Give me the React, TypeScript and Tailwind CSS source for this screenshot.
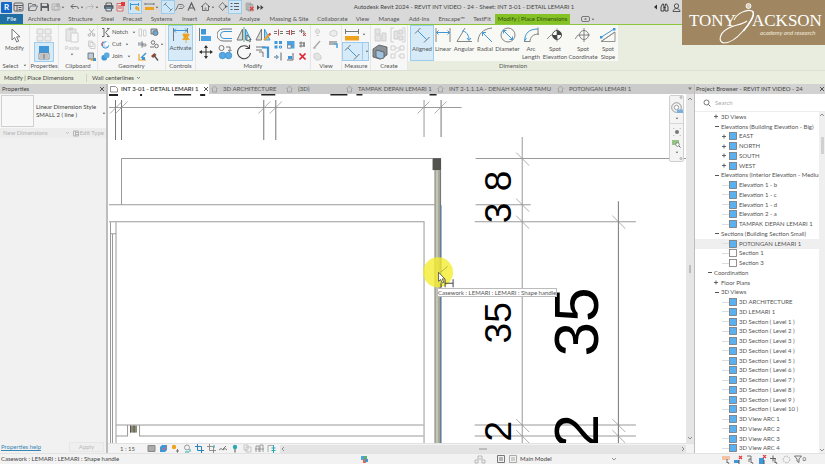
import type { ReactNode } from "react";

const BLUE = "#3f97d8";
const DARK = "#5b5f63";
const FADE = "#cfcfcf";

const Svg = ({ w, h, className = "", children }: { w: number; h: number; className?: string; children: ReactNode }) => (
    <svg width={w} height={h} viewBox={`0 0 ${w} ${h}`} fill="none" className={`shrink-0 ${className}`} aria-hidden="true">
        {children}
    </svg>
);

const Caret = ({ className = "" }: { className?: string }) => (
    <Svg w={4} h={3} className={className}>
        <path d="M.7 .7h2.600L2 2.300z" fill="#555" />
    </Svg>
);

/* ---------- Quick access bar ---------- */

const quick: { label: string; box: string; on?: boolean; caret?: boolean; art: ReactNode }[] = [
    { label: "Home", box: "w-[14px]", art: <><rect x="1" y="2" width="9" height="8" rx="1" stroke={DARK} /><path d="M1 4.500h9M4 4v6M5.500 6.500h3M5.500 8.500h3" stroke={DARK} /></> },
    { label: "Open", box: "w-[12px]", art: <path d="M1.500 9.500v-7h3l1 1h3v1.500M1.500 9.500l2-4.500h7l-2 4.500z" stroke={DARK} strokeWidth=".8" /> },
    { label: "Save", box: "w-[11px]", art: <><path d="M1.500 2h7l1.500 1.500V10H1.500z" fill={DARK} /><path d="M3 2.500h5v2.500H3zM3 7h5.500v3H3z" fill="#d9d9d9" /></> },
    { label: "Sync", box: "w-[19px]", caret: true, art: <><path d="M2 3h6v6H2zM4 5h6v4H4z" stroke="#b2b2b2" /><circle cx="8" cy="4" r="2" fill="#b2b2b2" /></> },
    { label: "Undo", box: "w-[15px]", caret: true, art: <path d="M4.500 3L2 5.500 4.500 8M2 5.500h5.500q2 .3 2 2.500" stroke={DARK} strokeWidth=".9" /> },
    { label: "Redo", box: "w-[19px]", caret: true, art: <path d="M7 3l2.500 2.500L7 8M9.500 5.500H4q-2 .3-2 2.500" stroke="#b8b8b8" strokeWidth=".9" /> },
    { label: "Print", box: "w-[12px]", art: <><path d="M3 4.500V2h5.500v2.500M3 8v2h5.500V8" stroke={DARK} /><rect x="1" y="4" width="9.500" height="4" rx="1" fill={DARK} /><path d="M3 7h5.500" stroke="#6db5e8" /></> },
    { label: "Close inactive", box: "w-[14px]", art: <><path d="M2 2.500h6V10H2z" fill="#e9e9e9" stroke="#d34b4b" strokeWidth=".8" /><path d="M3 5h4M3 7h4" stroke="#d34b4b" /><path d="M6 1h4v4H6z" fill="#e23b3b" /></> },
    { label: "Aligned dimension", box: "w-[12px] mr-[3px]", on: true, art: <><path d="M1 3.500h9M1.500 2v7M9.500 2v3" stroke={BLUE} /><path d="M6 7h3.500v3M7.500 5v4" stroke="#efa21d" strokeWidth="1.500" /></> },
    { label: "Measure", box: "w-[18px]", caret: true, art: <><path d="M1 3h9M1 2v2M10 2v2" stroke={DARK} strokeWidth=".8" /><path d="M1 6h9v3H1z" fill="#efa21d" /></> },
    { label: "Align", box: "w-[12px]", on: true, art: <><path d="M3 3l6 6" stroke={BLUE} strokeWidth=".9" /><path d="M1.500 4.500l3-3M7.500 10.500l3-3" stroke={DARK} strokeWidth=".7" /></> },
    { label: "Tag", box: "w-[12px]", art: <path d="M1.500 9.500l3-6h4l1.500 2-1.500 2h-4M6.500 5.500h1" stroke={DARK} strokeWidth=".8" /> },
    { label: "Text", box: "w-[14px]", art: <path d="M2 9.500L5.500 2 9 9.500M3.200 7h4.600" stroke={DARK} strokeWidth="1.200" /> },
    { label: "3D view", box: "w-[17px]", caret: true, art: <><path d="M1 6l4.500-4L10 6M2.500 5v4.500h6V5" stroke={DARK} strokeWidth=".9" /><path d="M4.500 6.500h2v3h-2z" fill="#9a9a9a" /></> },
    { label: "Section", box: "w-[12px]", art: <><path d="M5.500 1.500L9 5.500l-3.500 4-3.500-4z" stroke={DARK} strokeWidth=".8" /><path d="M8 4l3 1.500L8 7z" fill={DARK} /></> },
    { label: "Thin lines", box: "w-[12px] mr-[3px]", on: true, art: <path d="M1.500 2.500h2M5 2.500h5M1.500 5.500h2M5 5.500h5M1.500 8.500h2M5 8.500h5" stroke={DARK} strokeWidth="1.200" /> },
    { label: "Close hidden", box: "w-[13px]", art: <><path d="M2 2h5v7H2zM4 3.500h5V10H4z" fill="#bcbcbc" stroke="#999" strokeWidth=".6" /><path d="M6 6l3.500 3.500M9.500 6L6 9.500" stroke="#e23b3b" strokeWidth="1.200" /></> },
];

const TitleBar = () => (
    <header className="flex h-[14px] shrink-0 items-center bg-[#d9d9d9] pl-px text-[#444]">
        <button aria-label="Revit" className="mr-px flex h-[11px] w-[11px] items-center justify-center rounded-[1px] bg-[#1668c7] text-[8px] font-bold text-white">R</button>
        <div className="flex shrink-0 items-center">
            {quick.map((q) => (
                <button key={q.label} aria-label={q.label} className={`flex h-[12px] shrink-0 items-center ${q.box} ${q.on ? "bg-[#d0e6f5] outline outline-[#9dcbea]" : ""}`}>
                    <Svg w={11} h={12}>{q.art}</Svg>
                    {q.caret && <Caret />}
                </button>
            ))}
            <Svg w={7} h={7}><path d="M0 1l3 2.500L0 6zM3.500 1l3 2.500-3 2.500z" fill="#444" /></Svg>
        </div>
        <h1 className="flex-1 truncate pl-[10px] text-center">Autodesk Revit 2024 - REVIT INT VIDEO - 24 - Sheet: INT 3-01 - DETAIL LEMARI 1</h1>
        <div className="mr-[144px] flex items-center gap-[3px]">
            <Svg w={3} h={6}><path d="M3 .5v5L0 3z" fill="#333" /></Svg>
            <Svg w={9} h={9}><path d="M1 8V4l1.500-3h1L4 4v4zM5 8V4l.5-3h1L8 4v4z" stroke="#333" strokeWidth=".9" /><path d="M3.500 4.500h2" stroke="#333" /></Svg>
            <Svg w={9} h={9}><circle cx="4.500" cy="3" r="2.200" stroke="#333" strokeWidth=".8" /><path d="M1 8.500c0-2 2-3 3.500-3s3.500 1 3.500 3z" stroke="#333" strokeWidth=".8" /></Svg>
        </div>
    </header>
);

/* ---------- Ribbon ---------- */

const tabs = [
    ["Architecture", "w-[42px]"],
    ["Structure", "w-[31px]"],
    ["Steel", "w-[23px]"],
    ["Precast", "w-[27px]"],
    ["Systems", "w-[31px]"],
    ["Insert", "w-[25px]"],
    ["Annotate", "w-[33px]"],
    ["Analyze", "w-[29px]"],
    ["Massing & Site", "w-[50px]"],
    ["Collaborate", "w-[37px]"],
    ["View", "w-[23px]"],
    ["Manage", "w-[30px]"],
    ["Add-Ins", "w-[30px]"],
    ["Enscape™", "w-[35px]"],
    ["TestFit", "w-[26px]"],
];

const RibbonTabs = () => (
    <nav className="flex h-[11px] shrink-0 items-center border-b border-[#8cc63f] bg-[#d9d9d9] text-[#555]">
        <button className="h-full w-[23px] bg-[#1f6fa5] text-white">File</button>
        {tabs.map(([name, box]) => (
            <button key={name} className={`whitespace-nowrap text-center ${box}`}>{name}</button>
        ))}
        <button className="h-full w-[75px] whitespace-nowrap bg-[#84c225] text-[#33500c]">Modify | Place Dimensions</button>
        <button aria-label="Ribbon display" className="ml-[11px] flex items-center gap-px">
            <Svg w={9} h={6}><rect x=".5" y=".5" width="8" height="5" rx="1.500" stroke="#777" /><path d="M3 3.500h3L4.500 2z" fill="#555" /></Svg>
            <Caret />
        </button>
    </nav>
);

const Panel = ({ name, box, children, green, caret }: { name: string; box: string; children: ReactNode; green?: boolean; caret?: boolean }) => (
    <section className={`flex h-full shrink-0 flex-col ${box} ${green ? "" : "border-r border-[#e6e6e6]"}`}>
        <div className={`flex h-[36px] items-start pt-px ${green ? "bg-[#f8f9f5]" : ""}`}>{children}</div>
        <h2 className="flex h-[9px] items-center justify-center gap-1 whitespace-nowrap text-[#555]">
            {name}
            {caret && <Caret />}
        </h2>
    </section>
);

const Small = ({ label, children, box = "w-[12px]" }: { label: string; children: ReactNode; box?: string }) => (
    <button aria-label={label} className={`flex h-[12px] items-center justify-center ${box}`}>
        <Svg w={9} h={9}>{children}</Svg>
    </button>
);

const Big = ({ label, box = "w-[19px]", children }: { label: string; box?: string; children: ReactNode }) => (
    <button aria-label={label} className={`flex h-[17px] items-center justify-center ${box}`}>
        <Svg w={16} h={16}>{children}</Svg>
    </button>
);

const geometry: { label: string; art: ReactNode }[] = [
    { label: "Notch", art: <path d="M1 .5h2v8H1M8 .5L4.500 4.500 8 8.500M6 .5h2.500M6 8.500h2.500" stroke="#666" /> },
    { label: "Cut", art: <><circle cx="4.500" cy="5" r="3.200" fill="#cfe5f6" stroke={BLUE} /><path d="M2 1.500A4 4 0 0 0 1 6" stroke="#d34b4b" /><circle cx="6" cy="4" r="2" fill="#fff" /></> },
    { label: "Join", art: <><rect x=".5" y="3" width="5.500" height="5.500" rx="2" fill={BLUE} /><rect x="3" y=".5" width="5.500" height="5.500" rx="2" fill="#5aa9e2" /></> },
];

const modifySmall: { label: string; art: ReactNode }[] = [
    { label: "Split element", art: <><path d="M0 3.500h3M6 3.500h3M0 5.500h3M6 5.500h3" stroke="#777" /><path d="M4.500 1.500v6" stroke="#d34b4b" /></> },
    { label: "Split with gap", art: <><path d="M0 3.500h3M6 3.500h3M0 5.500h3M6 5.500h3" stroke="#777" /><path d="M3.500 2v5M5.500 2v5" stroke="#d34b4b" /></> },
    { label: "Unpin", art: <><path d="M1 3h5M3.500 1v4M6 3v5" stroke="#777" /><path d="M5 5l3 3M8 5L5 8" stroke="#d34b4b" /></> },
    { label: "Array", art: <><path d="M.5 1h3v3h-3zM5 1h3v3H5zM.5 5.500h3v3h-3z" fill={BLUE} /><path d="M5.500 6h2v2h-2z" stroke={BLUE} /></> },
    { label: "Scale", art: <><path d="M1 1h7.500v7.500H1z" fill="#4ba3e3" /><path d="M1.500 5h3.500v3H1.500z" fill="#fff" stroke="#777" strokeWidth=".7" /></> },
    { label: "Pin", art: <><path d="M1 3h6M1 6h6M3 1.500v6" stroke="#777" /><path d="M6 2.500v4" stroke="#777" strokeWidth="1.500" /></> },
    { label: "Trim single", art: <><path d="M0 5h4M7 .5v8" stroke="#666" /><path d="M2 3l2.500 2L2 7" stroke={BLUE} /></> },
    { label: "Trim multiple", art: <><path d="M1 8h6V1" stroke="#666" /><path d="M2 4h4v3H2z" fill={BLUE} /></> },
    { label: "Delete", art: <path d="M1.500 1.500l6 6M7.500 1.500l-6 6" stroke="#e0222c" strokeWidth="1.700" /> },
];

const dims: { name: string; box: string; on?: boolean; art: ReactNode }[] = [
    { name: "Aligned", box: "w-[22px]", on: true, art: <><path d="M4 4l8.500 8.500" stroke={BLUE} /><path d="M1 6.500L6.500 1M10 15.500L15.500 10" stroke="#666" strokeWidth=".9" /></> },
    { name: "Linear", box: "w-[20px]", art: <><path d="M1.500 5.500h13" stroke={BLUE} /><path d="M3.500 3.500l-2 2 2 2M12.500 3.500l2 2-2 2" stroke={BLUE} /><path d="M1 1v14M15 1v14" stroke="#777" strokeWidth=".9" /></> },
    { name: "Angular", box: "w-[22px]", art: <><path d="M1 14.500h15M1 14.500L9 1" stroke="#777" strokeWidth=".9" /><path d="M6 4c4 0 7 4 7 9" stroke={BLUE} /><path d="M11 11l2 2.500 2-2.500" stroke={BLUE} /></> },
    { name: "Radial", box: "w-[20px]", art: <><path d="M1 15C1 7 6 2 15 1" stroke="#777" strokeWidth=".9" /><path d="M6 6l9 9" stroke={BLUE} /><path d="M5.500 9V5.500H9" stroke={BLUE} /></> },
    { name: "Diameter", box: "w-[25px]", art: <><circle cx="8" cy="8" r="7" stroke="#777" strokeWidth=".9" /><path d="M3.500 3.500l9 9" stroke={BLUE} /><path d="M3.500 6.500v-3h3M12.500 9.500v3h-3" stroke={BLUE} /></> },
    { name: "Arc Length", box: "w-[22px]", art: <><path d="M1.500 14C2 6 6 2 15 2" stroke={BLUE} /><path d="M7 15c0-5 3-8 9-8M1 14.500h6M15 .5V8" stroke="#777" strokeWidth=".9" /><path d="M3.500 11l-2 3" stroke={BLUE} /></> },
    { name: "Spot Elevation", box: "w-[26px]", art: <><path d="M0 12l4-4h3" stroke="#777" strokeWidth=".9" /><circle cx="10" cy="8" r="4.500" fill="#fff" stroke="#555" /><path d="M10 8V3.500A4.500 4.500 0 0 1 14.500 8zM10 8v4.500A4.500 4.500 0 0 1 5.500 8z" fill="#444" /><path d="M10 1.500v13" stroke="#555" strokeWidth=".7" /></> },
    { name: "Spot Coordinate", box: "w-[30px]", art: <><path d="M0 12l3-4h12M9 1v14" stroke="#777" strokeWidth=".9" /><circle cx="9" cy="8" r="4.500" stroke="#777" strokeWidth=".9" /></> },
    { name: "Spot Slope", box: "w-[20px]", art: <><path d="M1 14.500h14V5zM1 14.500L15 5" stroke="#888" strokeWidth=".9" /><path d="M1.500 10L14 2" stroke={BLUE} /><path d="M0 9h2.500v2.500H0zM13 1h2.500v2.500H13z" fill={BLUE} /></> },
];

const Ribbon = () => (
    <div className="flex h-[45px] shrink-0 bg-[#e9eddf]">
        <div className="flex h-full bg-[#f7f7f7]">
            <Panel name="Select" box="w-[30px]" caret>
                <button className="flex w-full flex-col items-center">
                    <Svg w={14} h={18}><path d="M4 3v11l2.700-2.500 2 4.500 2-.9-2-4.300H12z" fill="#fff" stroke="#666" strokeWidth=".9" /></Svg>
                    Modify
                </button>
            </Panel>
            <Panel name="Properties" box="w-[29px]">
                <div className="flex w-full flex-col items-center">
                    <Big label="Type properties"><path d="M1 2h6v5H1zM9 2h6v5H9zM1 9h6v5H1zM9 9h6v5H9z" fill="#ececec" stroke={FADE} /></Big>
                    <button aria-label="Properties" className="flex h-[18px] w-[18px] items-center justify-center bg-[#d6eaf7] outline outline-[#9ccdee]">
                        <Svg w={14} h={15}><path d="M2 1h10v7H2z" fill={BLUE} /><path d="M2 8h10v6H2z" fill="#fff" stroke="#777" strokeWidth=".8" /><path d="M3 10h8M3 12h8M7 9v5" stroke="#666" strokeWidth=".8" /></Svg>
                    </button>
                </div>
            </Panel>
            <Panel name="Clipboard" box="w-[39px]">
                <button className="flex w-[26px] flex-col items-center text-[#c6c6c6]">
                    <Svg w={16} h={18}><path d="M2 3h10v12H2z" fill="#e6e6e6" stroke={FADE} /><path d="M5 1.500h4v3H5z" fill={FADE} /><path d="M7 7h7v9H7z" fill="#f8f8f8" stroke={FADE} /></Svg>
                    Paste
                    <Caret className="mt-px" />
                </button>
                <div>
                    <Small label="Cut to clipboard"><path d="M2 1l4 5M7 1L3 6" stroke="#b5b5b5" /><circle cx="2.300" cy="7" r="1.200" stroke="#b5b5b5" /><circle cx="6.700" cy="7" r="1.200" stroke="#b5b5b5" /></Small>
                    <Small label="Copy to clipboard"><path d="M1.500 1h3.500l1 1v4.500H1.500zM3 2.500h3.500L8 4v4.500H3z" fill="#f7f7f7" stroke={FADE} /></Small>
                    <Small label="Match type"><path d="M1 1h5.500v6H1z" fill="#bcd" stroke="#666" strokeWidth=".8" /><path d="M3 8l4-3 1 2-3 2z" fill="#efa21d" /><path d="M6 6h3v3H6z" fill={BLUE} /></Small>
                </div>
            </Panel>
            <Panel name="Geometry" box="w-[68px]">
                <div className="w-[38px] pl-[3px]">
                    {geometry.map((g) => (
                        <button key={g.label} className="flex h-[12px] w-full items-center gap-[2px]">
                            <Svg w={9} h={9}>{g.art}</Svg>
                            {g.label}
                            <Caret className="ml-[2px]" />
                        </button>
                    ))}
                </div>
                <div>
                    <Small label="Wall opening"><path d="M1 1h2.500v7H1zM5.500 2H8v6H5.500z" stroke={FADE} /></Small>
                    <Small label="Beam joins"><path d="M0 3h5v2H0zM4 4h4v2H4zM4 1v7" fill="#cfe0ee" stroke="#888" strokeWidth=".8" /></Small>
                    <Small label="Paint"><path d="M1 2v6h7" stroke="#efa21d" strokeWidth="1.200" /><path d="M3 6l5-5" stroke={BLUE} strokeWidth="1.400" /><path d="M4 5h3v3H4z" fill={BLUE} /></Small>
                </div>
                <div>
                    <Small label="Cope"><path d="M1 1h6v5H1z" fill="#a9c9e4" stroke="#777" /><circle cx="5.500" cy="5" r="2.500" fill="#6aa8d8" stroke="#777" /></Small>
                    <Small label="Wall joins"><circle cx="3" cy="2.500" r="1.800" stroke="#777" /><circle cx="6.500" cy="6" r="1.800" stroke="#777" /><path d="M0 7h4" stroke="#777" /></Small>
                    <Small label="Demolish"><path d="M1 4l3.500-3 2 2L3 6z" fill="#8a4a35" /><path d="M4.500 4L8 8.500" stroke="#555" strokeWidth="1.400" /></Small>
                </div>
                <Caret className="mt-[17px]" />
            </Panel>
            <Panel name="Controls" box="w-[30px]">
                <button className="mx-auto flex h-[34px] w-[23px] flex-col items-center bg-[#d6eaf7] outline outline-[#9ccdee]">
                    <Svg w={18} h={18}><path d="M2 4.500h13" stroke={BLUE} /><path d="M4 2.500l-2 2 2 2M13 2.500l2 2-2 2" stroke={BLUE} /><path d="M1.500 2v13M15.500 2v5" stroke="#777" /><path d="M11 8h6v1.500l-1.200.5v2l1.500 1.500H10.500L12 12v-2l-1-.5zM14 13v4" fill="#efa21d" stroke="#efa21d" strokeWidth=".8" /></Svg>
                    Activate
                </button>
            </Panel>
            <Panel name="Modify" box="w-[115px]">
                <div className="grid grid-cols-4">
                    <Big label="Align"><path d="M1.500 1v13" stroke="#777" /><path d="M3 2h5v5.500H3z" fill={BLUE} /><path d="M3 9h10v5H3z" fill="#4ba3e3" /></Big>
                    <Big label="Offset"><path d="M15 2H6a5.500 5.500 0 0 0 0 12h9" stroke="#777" /><path d="M15 4.500H7a3.500 3.500 0 0 0 0 7h8" stroke={BLUE} /></Big>
                    <Big label="Mirror pick"><path d="M6.500 2v11H1z" fill="#ddd" stroke="#777" /><path d="M9.500 2v11H15z" fill="#9fcdf0" stroke={BLUE} /><path d="M8 0v15" stroke="#3a9c4c" strokeWidth=".8" /><path d="M11 8v6l1.500-1 1 2 1-.5-1-2H15z" fill="#fff" stroke="#444" strokeWidth=".7" /></Big>
                    <Big label="Mirror draw"><path d="M6.500 2v11H1z" fill="#ddd" stroke="#777" /><path d="M9.500 2v11H15z" fill="#9fcdf0" stroke={BLUE} /><path d="M9 13l6-6" stroke="#efa21d" strokeWidth="2" /><path d="M14 8l1.500-1.500" stroke="#d34b4b" strokeWidth="2" /></Big>
                    <Big label="Move"><path d="M8 2v12M2 8h12" stroke="#333" /><path d="M8 1l2 3H6zM8 15l2-3H6zM1 8l3-2v4zM15 8l-3-2v4z" fill="#333" /></Big>
                    <Big label="Copy"><circle cx="4.500" cy="4" r="2.500" stroke="#777" /><path d="M9 3h4v4M11 6l2 1.500L14.500 6" stroke="#555" strokeWidth=".8" /><circle cx="5.500" cy="11.500" r="3.200" fill="#5aa9e2" stroke={BLUE} /><circle cx="11.500" cy="11.500" r="3.200" fill="#5aa9e2" stroke={BLUE} /></Big>
                    <Big label="Rotate"><path d="M13 4A6.500 6.500 0 1 0 14.500 9" stroke="#444" strokeWidth="1.100" /><path d="M9.500 4.500h4V.8" stroke="#444" strokeWidth="1.100" /></Big>
                    <Big label="Trim corner"><path d="M1 3h9M1 6h6" stroke="#777" /><path d="M7 3.500h6V14" stroke={BLUE} strokeWidth="2.200" /><path d="M8 13V8H4" stroke="#777" /></Big>
                </div>
                <div className="grid grid-cols-3">
                    {modifySmall.map((m) => (
                        <Small key={m.label} label={m.label}>{m.art}</Small>
                    ))}
                </div>
            </Panel>
            <Panel name="View" box="w-[31px]">
                <div className="grid grid-cols-[16px_14px]">
                    <Small label="Hide in view"><path d="M3 7.500h3M4.500 1a2.500 2.500 0 0 1 1 4.500H3.500A2.500 2.500 0 0 1 4.500 1z" fill="#e4e4e4" stroke={FADE} /></Small>
                    <Small label="Displace"><path d="M1 4l4-2 3 2v3L5 8.500 1 7z" fill="#ededed" stroke={FADE} /></Small>
                    <Small label="Override graphics"><path d="M1 8l6-7" stroke="#aaa" strokeWidth="1.400" /><path d="M0 8h3" stroke="#aaa" /></Small>
                    <Small label="Linework"><path d="M0 2h8M0 4h5" stroke="#666" strokeWidth="1.200" /><path d="M5 4h3v4" stroke={BLUE} strokeWidth="1.400" /></Small>
                    <Small label="Selection box"><path d="M1 2l4-1 3 3v3L4 8.500 1 6z" fill="#e4e4e4" stroke={FADE} /></Small>
                </div>
            </Panel>
            <Panel name="Measure" box="w-[29px]">
                <div className="flex flex-col pl-px">
                    <button aria-label="Measure between" className="flex h-[17px] items-center gap-[3px] pl-[2px]">
                        <Svg w={14} h={14}><path d="M0 3.500h14M.5 1v5M13.500 1v5" stroke="#777" /><path d="M0 8h14v4.500H0z" fill="#efa21d" /></Svg>
                        <Caret />
                    </button>
                    <button aria-label="Dimension" className="flex h-[17px] w-[25px] items-center gap-[2px] bg-[#d6eaf7] pl-px outline outline-[#9ccdee]">
                        <Svg w={16} h={16}><path d="M4 4l8.500 8.500" stroke={BLUE} /><path d="M1 6.500L6.500 1M10 15.500L15.500 10" stroke="#666" strokeWidth=".9" /></Svg>
                        <span className="h-full border-l border-[#9ccdee]" />
                        <Caret />
                    </button>
                </div>
            </Panel>
            <Panel name="Create" box="w-[37px]">
                <div className="grid grid-cols-2">
                    <Big label="Create assembly" box="w-[18px]"><path d="M3 2h5v5H3zM3 8h6v6H3zM10 6h4v8h-4z" fill="#e4e4e4" stroke={FADE} /></Big>
                    <Big label="Create parts" box="w-[18px]"><path d="M4 1H1v14h3M12 1h3v14h-3" stroke={FADE} /><path d="M4 4h4v8H4zM9 3h4v4H9zM9 9h4v4H9z" fill="#e4e4e4" stroke={FADE} /></Big>
                    <Big label="Create group" box="w-[18px]"><path d="M1 5l6-4 8 2v8l-7 4-7-2z" fill="#8b9299" stroke="#555" strokeWidth=".8" /><path d="M4 6l8 2v6L8 15l-4-2z" fill="#9fc3de" stroke="#555" strokeWidth=".8" /></Big>
                    <Big label="Create similar" box="w-[18px]"><path d="M1 2h4v4H1zM10 2h4v4h-4zM1 10h4v4H1zM10 10h4v4h-4zM5 4h5M5 9l6-4M8 12h2" stroke={FADE} /></Big>
                </div>
            </Panel>
        </div>
        <Panel name="Dimension" box="w-[210px]" green>
            <div className="flex pl-[3px]">
                {dims.map((d) => (
                    <button key={d.name} className={`flex h-[34px] flex-col items-center whitespace-nowrap leading-[8px] ${d.box} ${d.on ? "bg-[#d6eaf7] outline outline-[#9ccdee]" : ""}`}>
                        <Svg w={16} h={16} className="mt-px mb-[2px]">{d.art}</Svg>
                        {d.name.split(" ").map((word) => <span key={word}>{word}</span>)}
                    </button>
                ))}
            </div>
        </Panel>
    </div>
);

const OptionsBar = () => (
    <div className="flex h-[14px] shrink-0 items-center border-t border-[#dcdfd3] bg-[#eaeedf] pl-[4px] text-[#444]">
        <span className="w-[83px] border-r border-[#d0d3c8]">Modify | Place Dimensions</span>
        <select aria-label="Placement reference" className="ml-[5px] h-[10px] w-[44px] appearance-none">
            <option>Wall centerlines</option>
        </select>
        <Svg w={5} h={4}><path d="M1 1l1.500 1.500L4 1" stroke="#666" strokeWidth=".8" /></Svg>
    </div>
);

/* ---------- Properties ---------- */

const Cross = () => (
    <Svg w={6} h={6}><path d="M1 1l4 4M5 1L1 5" stroke="#444" strokeWidth=".9" /></Svg>
);

const Properties = () => (
    <aside className="flex w-[107px] shrink-0 flex-col border-r border-[#bdbdbd] bg-[#f1f1f1] text-[#444]">
        <div className="flex h-[10px] items-center justify-between bg-[#d2d2d2] pl-[2px] pr-px">
            <h2>Properties</h2>
            <button aria-label="Close properties"><Cross /></button>
        </div>
        <div className="flex h-[34px] items-center bg-[#f7f7f7]">
            <div className="ml-px h-[32px] w-[33px] border border-[#d0d0d0] bg-[#f8f8f8]" />
            <p className="ml-[2px] flex-1 leading-[8px]">Linear Dimension Style<br />SMALL 2 ( line )</p>
            <Caret className="mt-[4px]" />
        </div>
        <div className="flex h-[10px] items-center justify-between bg-[#ececec] pl-[3px] pr-[2px] text-[#b4b4b4]">
            <span className="flex-1">New Dimensions</span>
            <Svg w={5} h={4} className="mr-[3px]"><path d="M1 1l1.500 1.500L4 1" stroke="#b4b4b4" strokeWidth=".8" /></Svg>
            <button disabled className="flex items-center gap-px">
                <Svg w={6} h={7}><path d="M.5 1h5v5h-5zM2.500 1v5M2.500 2.500h3M2.500 4.500h3" stroke="#aaa" strokeWidth=".8" /></Svg>
                Edit Type
            </button>
        </div>
        <div className="flex-1" />
        <div className="flex h-[12px] items-center justify-between pl-px pr-[2px]">
            <a href="#help" className="text-[#3a86b4] underline">Properties help</a>
            <button disabled className="h-[10px] w-[35px] border border-[#e6e6e6] bg-[#efefef] text-[#b8b8b8]">Apply</button>
        </div>
    </aside>
);

/* ---------- Sheet view ---------- */

const views = [
    ["3D ARCHITECTURE", "w-[75px]"],
    ["{3D}", "w-[60px]"],
    ["TAMPAK DEPAN LEMARI 1", "w-[91px]"],
    ["INT 2-1.1.1A - DENAH KAMAR TAMU", "w-[120px]"],
    ["POTONGAN LEMARI 1", "flex-1"],
];

const ViewTabs = () => (
    <div className="flex h-[10px] shrink-0 items-center bg-[#cbcbcb] text-[#555]">
        <div className="flex h-full w-[101px] items-center gap-[3px] bg-white pl-[2px] font-semibold text-[#333]">
            <Svg w={8} h={8}><path d="M.5 1.500h5l2 2v3.500h-7z" stroke="#777" strokeWidth=".8" /></Svg>
            <span className="flex-1 whitespace-nowrap">INT 3-01 - DETAIL LEMARI 1</span>
            <button aria-label="Close view"><Cross /></button>
        </div>
        {views.map(([name, box]) => (
            <button key={name} className={`flex items-center gap-[5px] whitespace-nowrap pl-[2px] ${box}`}>
                <Svg w={7} h={8}><path d="M.5 4L3.500 1l3 3M1.500 3.500V7h4V3.500" stroke="#999" strokeWidth=".8" /></Svg>
                {name}
            </button>
        ))}
        <Svg w={9} h={4}><path d="M3 .5h4L5 3z" fill="#777" /></Svg>
    </div>
);

const slashes: [number, number][] = [[116, 107.5], [121.5, 107.5], [264, 107.5], [275.5, 107.5], [423, 107.5], [440, 107.5]];
const ticks: [number, number][] = [[521.5, 158.5], [521.5, 204.5], [521.5, 221.5], [521.5, 424.5], [521.5, 435.5], [617.5, 221.5], [617.5, 424.5], [617.5, 435.5]];

const Drawing = () => (
    <svg viewBox="108 94 577 349" preserveAspectRatio="xMinYMin slice" className="absolute inset-0 size-full" fill="none" role="img" aria-label="Detail lemari 1">
        <path d="M109 94h9v2h-9zM140 94h2v2h-2zM174 94h17v1.500h-17zM200 94h5v2h-5zM261 94h14v1.500h-14zM330 94h17v1.500h-17zM356 94h6v1.500h-6zM429 94h7v1.500h-7z" fill="#222" />
        <g stroke="#9a9a9a">
            <path d="M109 107.500H461M423.500 100v37" />
            <path d="M121.500 158.500V204.500M121.500 158.500H432M109 204.500H440M109 221.500H423.500V443" />
            <path d="M110.500 222v221M112.500 233v210M116 222v221M110.500 233.500h5.500" />
            <path d="M116 424.500H423M116 435.500H127.500V424.500M139.500 424.500V435.500H423" />
            <path d="M475 158.500H685M475 204.500H530M474 221.500H635M474 424.500H635M474 435.500H635M521.500 137V443" />
        </g>
        <path d="M115.500 100v40M121.500 100v40M263.500 100v40M275.500 100v40M440.500 100v37M617.500 201V443" stroke="#777" />
        {slashes.map(([x, y]) => <path key={`${x}`} d={`M${x - 6} ${y + 6}l12-12`} stroke="#999" strokeWidth=".8" />)}
        {ticks.map(([x, y]) => <path key={`${x}-${y}`} d={`M${x - 6} ${y - 6}l13 13`} stroke="#999" strokeWidth=".8" />)}

        <rect x="130" y="425" width="7" height="7" fill="#8d8c78" />
        <path d="M130.500 425v7M134 425v7" stroke="#55544a" />

        <rect x="434" y="170" width="6" height="273" fill="#c3c4b4" />
        <path d="M434.500 170v273M438.500 170v273" stroke="#8b8c80" />
        <path d="M440 170v273" stroke="#6b7178" />
        <path d="M440.500 205v238" stroke="#5d86ad" />
        <rect x="432" y="158" width="8.500" height="12" fill="#52534f" />

        <g fill="#000" fontFamily="'Liberation Sans', Arial, sans-serif" fontSize="37">
            <text transform="translate(510 191) rotate(-90)">8</text>
            <text transform="translate(510 223) rotate(-90)">3</text>
            <text transform="translate(510 343) rotate(-90)">35</text>
            <text transform="translate(510 441) rotate(-90)">2</text>
        </g>
        <g fill="#000" fontFamily="'Liberation Sans', Arial, sans-serif" fontSize="62">
            <text transform="translate(597 356) rotate(-90)">35</text>
            <text transform="translate(597 448) rotate(-90)">2</text>
        </g>

        <circle cx="437.500" cy="272" r="15" fill="#f4ec2f" fillOpacity=".8" />
        <path d="M440 272l7-6" stroke="#a9a540" strokeWidth=".8" />
        <path d="M444.500 279v8M452.500 279v8M444.500 283h8M440.500 283v4" stroke="#444" />
        <path d="M438 272v9l2-1.800 1.700 3.500 1.500-.7-1.600-3.400h2.700z" fill="#fff" stroke="#444" strokeWidth=".8" />
    </svg>
);

const NavBar = () => (
    <div className="absolute top-px right-[2px] flex h-[67px] w-[15px] flex-col items-center justify-between rounded-[2px] border border-[#cfcfcf] bg-[#f4f4f4] pb-px">
        <Svg w={13} h={3}><circle cx="11" cy="1.500" r="1" stroke="#888" strokeWidth=".6" /></Svg>
        <button aria-label="Steering wheel"><Svg w={12} h={12}><circle cx="5.500" cy="5.500" r="4.800" stroke="#999" /><circle cx="5.500" cy="5.500" r="2.200" fill="#fff" stroke="#888" strokeWidth=".8" /><path d="M6 7.500h6v3.500H6z" fill="#7ab0db" /></Svg></button>
        <Caret />
        <hr className="w-full border-[#d6d6d6]" />
        <button aria-label="Pan"><Svg w={8} h={8}><path d="M0 0h1.500M6.500 0H8M0 8h1.500M6.500 8H8" stroke="#999" /><circle cx="4" cy="4" r="2" fill="#777" /></Svg></button>
        <button aria-label="Zoom region"><Svg w={9} h={9}><path d="M0 1h7v5H0z" fill="#95c386" /><circle cx="5.500" cy="5.500" r="1.800" fill="#fff" stroke="#666" strokeWidth=".7" /><path d="M7 7l1.500 1.500" stroke="#666" /></Svg></button>
        <Caret />
        <Svg w={13} h={3}><circle cx="11" cy="1.500" r="1" stroke="#888" strokeWidth=".6" /></Svg>
    </div>
);

const controls: { label: string; art: ReactNode }[] = [
    { label: "Detail level", art: <path d="M1 1.500h7v6H1z" fill="#aaa" stroke="#888" /> },
    { label: "Visual style", art: <><path d="M1 3l2-2h5v5L6 8H1z" fill={BLUE} /><path d="M3 4l2 2 3-4" stroke="#e06464" /></> },
    { label: "Sun path", art: <><circle cx="3" cy="3" r="2.200" fill="#efa21d" /><path d="M6.500 5v3.500M5 7h3" stroke="#777" /></> },
    { label: "Shadows", art: <><circle cx="4" cy="3.500" r="2.500" stroke="#888" strokeWidth=".8" /><path d="M2 8h4M7 5v3" stroke="#2ba7b5" /></> },
    { label: "Crop view", art: <path d="M2.500 0v6.500H9M0 2.500h6.500V9" stroke="#2b82b8" /> },
    { label: "Show crop", art: <><path d="M2.500 0v6.500H9M0 2.500h6.500V9" stroke="#777" strokeWidth=".8" /><path d="M7 1v3" stroke="#2ba7b5" /></> },
    { label: "Hide isolate", art: <path d="M0 6q2-3 4 0 2-3 4 0M7 2L4 5" stroke="#777" /> },
    { label: "Reveal hidden", art: <><circle cx="4" cy="3" r="2.200" fill="#2ba7b5" /><path d="M4 5v3.500" stroke="#555" /></> },
    { label: "View properties", art: <path d="M1 1h4v5H1zM3 3h5v5H3z" stroke="#bbb" strokeWidth=".8" /> },
    { label: "Analytical model", art: <path d="M1 8V2h3v6M5 8V1h3v7M0 5h9" stroke="#888" strokeWidth=".8" /> },
    { label: "Constraints", art: <><path d="M1 8V1.500h5" stroke="#999" strokeWidth=".8" /><path d="M6.500 1v8M4.500 4h4M4.500 6.500h4" stroke="#2ba7b5" /></> },
];

const ViewControls = () => (
    <div className="flex h-[10px] shrink-0 items-center border-t border-[#e2e2e2] bg-[#f3f3f3] text-[#555]">
        <span className="w-[36px] pl-[12px] whitespace-nowrap">1 : 15</span>
        <div className="ml-[3px] flex gap-[3px] pr-[4px]">
            {controls.map((c) => (
                <button key={c.label} aria-label={c.label}><Svg w={9} h={9}>{c.art}</Svg></button>
            ))}
        </div>
        <div className="flex h-[8px] flex-1 items-center justify-between bg-[#e4e4e4] px-px">
            <Svg w={4} h={6}><path d="M3 1L1 3l2 2" stroke="#777" strokeWidth=".8" /></Svg>
            <span className="h-[2px] w-[8px] bg-[#bdbdbd]" />
            <Svg w={4} h={6}><path d="M1 1l2 2-2 2" stroke="#777" strokeWidth=".8" /></Svg>
        </div>
        <span className="w-[8px]" />
    </div>
);

const SheetView = () => (
    <main className="flex min-w-0 flex-1 flex-col border-l border-[#bdbdbd]">
        <ViewTabs />
        <div className="flex min-h-0 flex-1">
            <div className="relative flex-1 overflow-hidden bg-white">
                <Drawing />
                <NavBar />
                <div role="tooltip" className="absolute top-[194px] left-[329px] border border-[#bbb] bg-white leading-[7px] whitespace-nowrap text-[#555]">
                    Casework : LEMARI : LEMARI : Shape handle
                </div>
            </div>
            <div className="flex w-[8px] flex-col items-center justify-between bg-[#e6e6e6] py-[3px]">
                <Svg w={6} h={4}><path d="M1 3l2-2 2 2" stroke="#777" strokeWidth=".8" /></Svg>
                <span className="h-[8px] w-[2px] bg-[#bdbdbd]" />
                <Svg w={6} h={4}><path d="M1 1l2 2 2-2" stroke="#777" strokeWidth=".8" /></Svg>
            </div>
        </div>
        <ViewControls />
    </main>
);

/* ---------- Project browser ---------- */

type Node = { text: string; kind: "root" | "group" | "view" | "empty"; sign?: "+" | "-"; active?: boolean };

const levels = Array.from({ length: 10 }, (_, i): Node => ({ text: `3D Section ( Level ${i + 1} )`, kind: "view" }));
const arcs = Array.from({ length: 4 }, (_, i): Node => ({ text: `3D View ARC ${i + 1}`, kind: "view" }));

const tree: Node[] = [
    { text: "3D Views", kind: "group", sign: "+" },
    { text: "Elevations (Building Elevation - Big)", kind: "group", sign: "-" },
    { text: "EAST", kind: "view", sign: "+" },
    { text: "NORTH", kind: "view", sign: "+" },
    { text: "SOUTH", kind: "view", sign: "+" },
    { text: "WEST", kind: "view", sign: "+" },
    { text: "Elevations (Interior Elevation - Medium)", kind: "group", sign: "-" },
    { text: "Elevation 1 - b", kind: "view" },
    { text: "Elevation 1 - c", kind: "view" },
    { text: "Elevation 1 - d", kind: "view" },
    { text: "Elevation 2 - a", kind: "view" },
    { text: "TAMPAK DEPAN LEMARI 1", kind: "view" },
    { text: "Sections (Building Section Small)", kind: "group", sign: "-" },
    { text: "POTONGAN LEMARI 1", kind: "view", active: true },
    { text: "Section 1", kind: "empty" },
    { text: "Section 3", kind: "empty" },
    { text: "Coordination", kind: "root", sign: "-" },
    { text: "Floor Plans", kind: "group", sign: "+" },
    { text: "3D Views", kind: "group", sign: "-" },
    { text: "3D ARCHITECTURE", kind: "view" },
    { text: "3D LEMARI 1", kind: "view" },
    ...levels,
    ...arcs,
];

const indent = { root: "pl-[12px]", group: "pl-[19px]", view: "pl-[27px]", empty: "pl-[27px]" };

const TreeRow = ({ node }: { node: Node }) => {
    const leaf = node.kind === "view" || node.kind === "empty";
    return (
        <li className={`flex min-h-0 flex-1 items-center whitespace-nowrap ${indent[node.kind]} ${node.active ? "bg-[#efefef]" : ""}`}>
            <Svg w={7} h={5}>
                {leaf && !node.sign && <path d="M0 2.500h7" stroke="#ddd" />}
                {node.sign === "-" && <path d="M1 2.500h4" stroke="#555" />}
                {node.sign === "+" && <path d="M0 2.500h4M2 .5v4" stroke="#555" strokeWidth=".9" />}
            </Svg>
            {leaf && (
                <Svg w={8} h={8} className="mr-[2px]">
                    <rect x=".5" y=".5" width="7" height="7" fill={node.kind === "view" ? "#5bb0ef" : "#fff"} stroke="#777" strokeWidth=".8" />
                </Svg>
            )}
            <span>{node.text}</span>
        </li>
    );
};

const Browser = () => (
    <aside className="flex w-[131px] shrink-0 flex-col border-l border-[#bdbdbd] bg-white text-[#555]">
        <div className="flex h-[10px] items-center justify-between bg-[#d2d2d2] pl-px text-[#444]">
            <h2>Project Browser - REVIT INT VIDEO - 24</h2>
            <button aria-label="Close browser"><Cross /></button>
        </div>
        <label className="flex h-[17px] items-center gap-[4px] pl-[8px]">
            <Svg w={8} h={8}><circle cx="3.500" cy="3.500" r="2.500" stroke="#555" strokeWidth=".8" /><path d="M5.500 5.500l2 2" stroke="#555" strokeWidth=".9" /></Svg>
            <input placeholder="Search" aria-label="Search views" className="min-w-0 flex-1 bg-transparent outline-none placeholder:text-[#aaa]" />
        </label>
        <div className="flex min-h-0 flex-1 border-t border-[#ededed]">
            <ul className="flex min-w-0 flex-1 flex-col overflow-hidden">
                {tree.map((node, i) => <TreeRow key={i} node={node} />)}
            </ul>
            <div className="flex w-[6px] flex-col items-center justify-between bg-[#efefef] py-px">
                <Svg w={6} h={4}><path d="M1 3l2-2 2 2" stroke="#777" strokeWidth=".8" /></Svg>
                <span className="mt-[20px] h-[17px] w-[3px] bg-[#d0d0d0]" />
                <span className="flex-1" />
                <Svg w={6} h={4}><path d="M1 1l2 2 2-2" stroke="#777" strokeWidth=".8" /></Svg>
            </div>
        </div>
    </aside>
);

/* ---------- Status bar ---------- */

const filters: { label: string; art: ReactNode }[] = [
    { label: "Select links", art: <><path d="M0 1h8v4H0z" fill="#f2c3a4" /><path d="M5 4v4l1-1 1 2" stroke="#555" strokeWidth=".8" /></> },
    { label: "Select underlay", art: <><path d="M0 5h5v3H0z" fill={BLUE} /><path d="M5 1l3 3M8 1L5 4" stroke="#e23b3b" strokeWidth="1.200" /><path d="M5 5v4" stroke="#555" /></> },
    { label: "Select pinned", art: <path d="M1 1h4v3H3v3M5 4v4l1-1 1 2" stroke="#666" strokeWidth=".9" /> },
    { label: "Select by face", art: <><path d="M1 3h5v6H1z" fill={BLUE} /><path d="M5 0l3 3M8 0L5 3" stroke="#e23b3b" strokeWidth="1.200" /><path d="M6 5v4" stroke="#555" /></> },
    { label: "Drag elements", art: <path d="M0 3.500h6M3 .5v6M5 4v4l1-1 1 2" stroke="#555" strokeWidth=".9" /> },
    { label: "Background process", art: <circle cx="4.500" cy="4.500" r="3.300" stroke="#aaa" strokeDasharray="1.500 1" /> },
];

const StatusBar = () => (
    <footer className="flex h-[11px] shrink-0 items-center border-t border-[#e2e2e2] bg-[#f2f2f2] text-[#444]">
        <span className="w-[360px] pl-px">Casework : LEMARI : LEMARI : Shape handle</span>
        <Svg w={9} h={9}><path d="M1 1h3v4H1z" fill="#4ba3e3" /><path d="M4 1h3v3H4z" fill="#58b368" /><path d="M3 4h3v4H3z" fill="#e5674e" /><path d="M5 4h3v3H5z" fill={BLUE} /></Svg>
        <div className="ml-[105px] flex items-center gap-[4px]">
            <Svg w={12} h={9}><path d="M1 8h3V5H1zM4 1h4v3H4zM8 5h3v3H8z" stroke="#aaa" strokeWidth=".8" /></Svg>
            <span className="w-[3px]" />
            <Svg w={8} h={8}><path d="M.5 .5h7v7h-7zM2 3h4M2 5h4" stroke="#777" /></Svg>
            <Svg w={8} h={8}><path d="M.5 .5h7v7h-7zM2 3h4M2 5h4" stroke="#aaa" /></Svg>
        </div>
        <select aria-label="Active workset" className="ml-[3px] h-[9px] w-[91px] appearance-none">
            <option>Main Model</option>
        </select>
        <Svg w={6} h={4}><path d="M1 1l2 2 2-2" stroke="#777" strokeWidth=".8" /></Svg>
        <div className="mr-[19px] ml-auto flex items-center gap-[3px]">
            {filters.map((f) => (
                <button key={f.label} aria-label={f.label}><Svg w={9} h={9}>{f.art}</Svg></button>
            ))}
            <button className="flex items-center gap-px">
                <Svg w={8} h={8}><path d="M.5 1h7L5 4v3.500L3 6V4z" stroke="#555" strokeWidth=".8" /></Svg>
                0
            </button>
        </div>
    </footer>
);

const Logo = () => (
    <div className="absolute top-0 right-0 h-[45px] w-[143px] bg-[#a08761]">
        <svg viewBox="0 0 143 45" className="size-full" fill="none" role="img" aria-label="Tony Jackson academy and research">
            <g fill="#fff" fontFamily="'Liberation Serif', serif" fontSize="17">
                <text x="7" y="26">TONY</text>
                <text x="70" y="26">ACKSON</text>
            </g>
            <text x="78" y="35" fill="#efe7d8" fontFamily="Lato, sans-serif" fontSize="6" fontStyle="italic">academy and research</text>
            <circle cx="66.500" cy="6" r="2.500" fill="#fff" fillOpacity=".6" stroke="#fff" strokeWidth=".8" />
            <path d="M52 20C55 13 65 9 70 11c5 3-3 14-9 20-6 7-13 12-19 12-6-1-5-9 3-14 6-4 15-4 20-8" stroke="#fff" strokeWidth="1.100" />
            <path d="M70.500 11c3 3-4 14-9 20" stroke="#fff" strokeWidth="1.200" />
        </svg>
    </div>
);

export default function App() {
    return (
        <div className="relative flex h-screen flex-col overflow-hidden bg-[#f2f2f2] font-['Lato','Open_Sans',sans-serif] text-[6px] leading-[8px] text-[#555]">
            <TitleBar />
            <RibbonTabs />
            <Ribbon />
            <OptionsBar />
            <div className="flex min-h-0 flex-1">
                <Properties />
                <SheetView />
                <Browser />
            </div>
            <StatusBar />
            <Logo />
        </div>
    );
}
